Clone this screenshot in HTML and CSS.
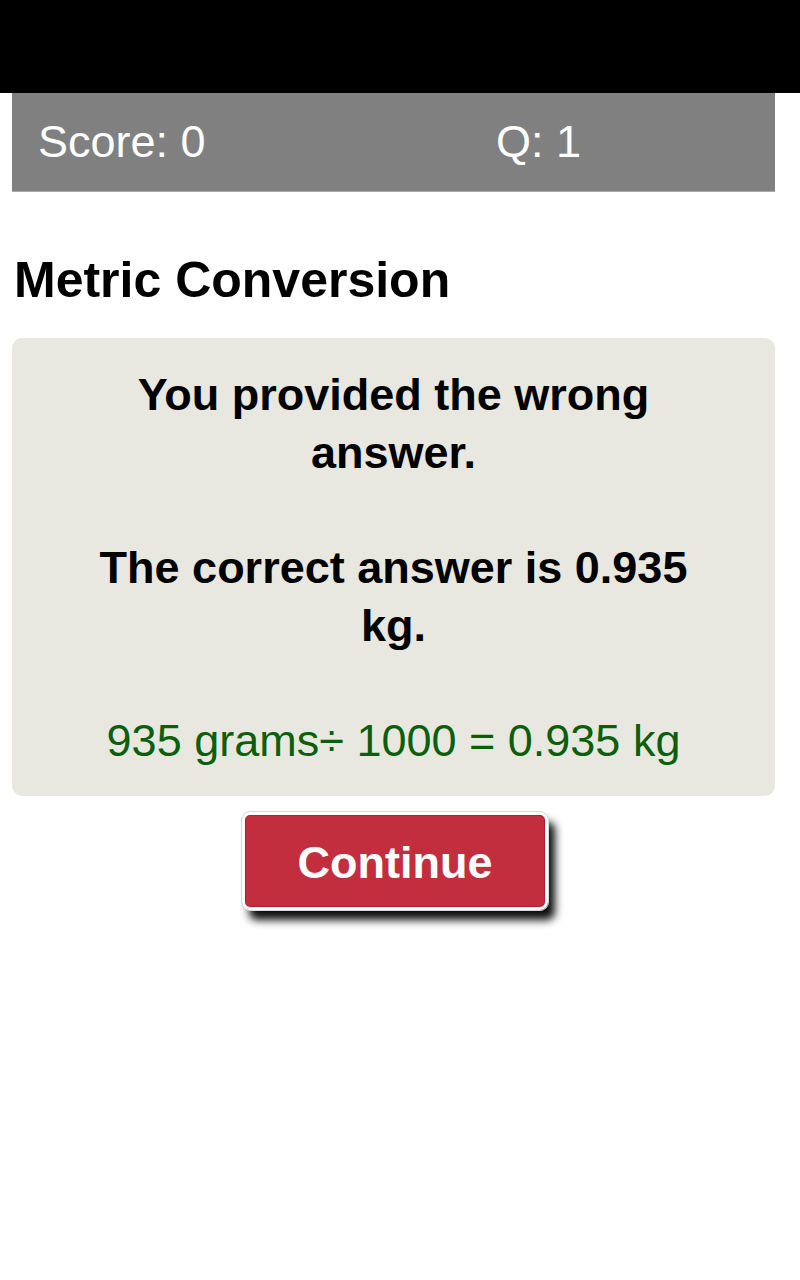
FILE: index.html
```html
<!DOCTYPE html>
<html lang="en">

<head>
    <meta charset="UTF-8">
    <meta name="viewport" content="width=device-width, initial-scale=1.0">
    <title>Metric Conversion</title>
    <link rel="stylesheet" href="styles.css">
</head>

<body>
    <div class="topbar"></div>
    <div class="page">
        <!-- score bar -->
        <div class="scorebar">
            <span>Score: 0</span>
            <span>Q: 1</span>
        </div>
        <h2 class="title">Metric Conversion</h2>
        <!-- result card -->
        <div class="card">
            <p class="msg">You provided the wrong answer.</p>
            <p class="msg">The correct answer is 0.935 kg.</p>
            <p class="calc">935 grams&divide; 1000 = 0.935 kg</p>
        </div>
        <div class="actions">
            <button type="button">Continue</button>
        </div>
    </div>
</body>

</html>
```

FILE: styles.css
```css
* {
    margin: 0;
    padding: 0;
    box-sizing: border-box;
}

body {
    font-family: "Liberation Sans", Arial, sans-serif;
    background-color: white;
    color: black;
}

.topbar {
    height: 93px;
    background-color: black;
}

.page {
    width: 763px;
    margin-left: 12px;
}

.scorebar {
    display: grid;
    grid-template-columns: 458px 1fr;
    align-items: center;
    height: 99px;
    padding-left: 26px;
    background-color: #808080;
    border-bottom: 1px solid #a8a8a8;
    color: white;
    font-size: 45px;
}

.title {
    margin-top: 59px;
    padding-left: 2px;
    font-size: 50px;
    line-height: 58px;
}

.card {
    margin-top: 29px;
    padding: 28px 20px 26px;
    background-color: #e8e8e0;
    border-radius: 10px;
    text-align: center;
    font-size: 45px;
    line-height: 58px;
}

.msg {
    font-weight: bold;
    padding: 0 40px;
    margin-bottom: 57px;
}

.calc {
    color: #0b5e0b;
}

.actions {
    display: flex;
    justify-content: center;
    padding: 16px 0 40px 3px;
}

button {
    width: 306px;
    height: 98px;
    padding-top: 4px;
    background-color: #c22e3e;
    color: white;
    font-family: "Liberation Sans", Arial, sans-serif;
    font-size: 45px;
    font-weight: bold;
    border: 3px solid white;
    border-radius: 8px;
    outline: 1px solid #d8d8d8;
    box-shadow: inset 0 0 0 1px #a82232, 7px 10px 8px rgba(0, 0, 0, 0.95);
    cursor: pointer;
}
```
